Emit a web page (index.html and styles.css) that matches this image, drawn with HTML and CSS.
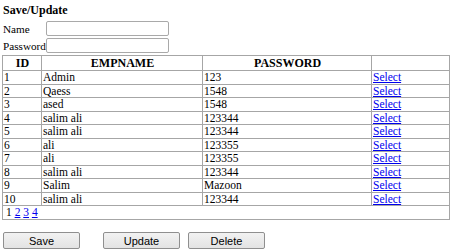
FILE: index.html
```
<!DOCTYPE html>
<html lang="en">
<head>
    <meta charset="UTF-8">
    <title>Save/Update</title>
    <link rel="stylesheet" href="styles.css">
</head>
<body>
    <div class="page">
        <h3 class="title">Save/Update</h3>

        <div class="form">
            <label for="name">Name</label>
            <input type="text" id="name">
            <label for="password">Password</label>
            <input type="text" id="password">
        </div>

        <table class="grid">
            <tr class="head">
                <th class="c-id">ID</th>
                <th class="c-name">EMPNAME</th>
                <th class="c-pass">PASSWORD</th>
                <th class="c-sel">&nbsp;</th>
            </tr>
            <tr><td>1</td><td>Admin</td><td>123</td><td><a href="#">Select</a></td></tr>
            <tr><td>2</td><td>Qaess</td><td>1548</td><td><a href="#">Select</a></td></tr>
            <tr><td>3</td><td>ased</td><td>1548</td><td><a href="#">Select</a></td></tr>
            <tr><td>4</td><td>salim ali</td><td>123344</td><td><a href="#">Select</a></td></tr>
            <tr><td>5</td><td>salim ali</td><td>123344</td><td><a href="#">Select</a></td></tr>
            <tr><td>6</td><td>ali</td><td>123355</td><td><a href="#">Select</a></td></tr>
            <tr><td>7</td><td>ali</td><td>123355</td><td><a href="#">Select</a></td></tr>
            <tr><td>8</td><td>salim ali</td><td>123344</td><td><a href="#">Select</a></td></tr>
            <tr><td>9</td><td>Salim</td><td>Mazoon</td><td><a href="#">Select</a></td></tr>
            <tr><td>10</td><td>salim ali</td><td>123344</td><td><a href="#">Select</a></td></tr>
            <tr class="pager">
                <td colspan="4"><span>1</span> <a href="#">2</a> <a href="#">3</a> <a href="#">4</a></td>
            </tr>
        </table>

        <div class="actions">
            <button class="btn">Save</button>
            <button class="btn btn-update">Update</button>
            <button class="btn">Delete</button>
        </div>
    </div>
</body>
</html>
```

FILE: styles.css
```
body {
    margin: 0;
    font-family: "Liberation Serif", "Times New Roman", serif;
    font-size: 11.5px;
    color: #000;
    background: #fff;
}
.page {
    padding: 4px 2px 0 2px;
}
.title {
    margin: 0 0 0 1px;
    font-size: 12px;
    line-height: 12px;
    font-weight: bold;
}
.form {
    display: grid;
    grid-template-columns: 43px 123px;
    row-gap: 2px;
    align-items: center;
    margin: 5px 0 0 1px;
}
.form label {
    font-size: 11.2px;
    line-height: 14px;
    white-space: nowrap;
}
.form input {
    height: 15px;
    box-sizing: border-box;
    border: 1px solid #a9a9a9;
    border-radius: 2px;
    padding: 0;
    margin: 0;
    font-size: 11px;
}
.grid {
    width: 448px;
    margin-top: 2px;
    border-collapse: collapse;
    border: 1px solid #a6a6a6;
    font-size: 11.5px;
}
.grid th, .grid td {
    border: 1px solid #a6a6a6;
    padding: 0 0 0 1px;
    height: 12.5px;
    line-height: 12.5px;
    font-weight: normal;
    text-align: left;
    white-space: nowrap;
}
.grid th {
    height: 14px;
    line-height: 14px;
    font-size: 12px;
    font-weight: bold;
    text-align: center;
}
.c-id { width: 37px; }
.c-name { width: 159px; }
.c-pass { width: 167px; }
.grid a {
    color: #0000ee;
    text-decoration: underline;
}
.pager td {
    height: 13px;
    line-height: 13px;
    padding-left: 3px;
}
.actions {
    display: flex;
    margin-top: 12px;
    padding-left: 1px;
}
.btn {
    width: 77px;
    height: 17px;
    padding: 0;
    margin-right: 23px;
    font-family: "Liberation Sans", Arial, sans-serif;
    font-size: 11px;
    color: #000;
    background: linear-gradient(#f2f2f2, #e3e3e3);
    border: 1px solid #8f8f8f;
    border-radius: 2px;
}
.btn-update {
    margin-right: 8px;
}
```
